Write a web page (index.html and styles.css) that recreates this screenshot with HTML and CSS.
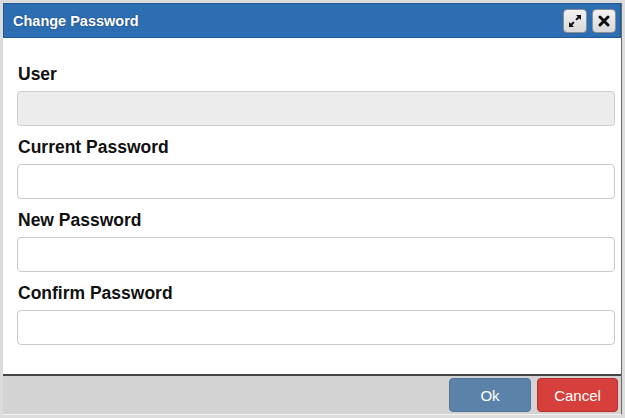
FILE: index.html
```html
<!DOCTYPE html>
<html>
<head>
<meta charset="utf-8">
<link rel="stylesheet" href="styles.css">
</head>
<body>
<div class="dialog">
  <div class="titlebar">
    <span class="title">Change Password</span>
    <div class="tools">
      <button class="tool" aria-label="Maximize">
        <svg width="14" height="14" viewBox="0 0 14 14">
          <path d="M8 1h5v5l-1.8-1.8-2.4 2.4-1.4-1.4 2.4-2.4z" fill="#111"/>
          <path d="M6 13H1V8l1.8 1.8 2.4-2.4 1.4 1.4-2.4 2.4z" fill="#111"/>
        </svg>
      </button>
      <button class="tool" aria-label="Close">
        <svg width="12" height="12" viewBox="0 0 12 12">
          <path d="M2 2L10 10M10 2L2 10" stroke="#111" stroke-width="3" stroke-linecap="round"/>
        </svg>
      </button>
    </div>
  </div>
  <div class="content">
    <div class="field">
      <label class="label">User</label>
      <input class="input disabled" type="text" disabled>
    </div>
    <div class="field">
      <label class="label">Current Password</label>
      <input class="input" type="password">
    </div>
    <div class="field">
      <label class="label">New Password</label>
      <input class="input" type="password">
    </div>
    <div class="field">
      <label class="label">Confirm Password</label>
      <input class="input" type="password">
    </div>
  </div>
  <div class="footer">
    <button class="btn ok">Ok</button>
    <button class="btn cancel">Cancel</button>
  </div>
</div>
</body>
</html>
```
FILE: styles.css
```css
html, body {
  margin: 0;
  padding: 0;
  background: #dcdcdc;
  font-family: "Liberation Sans", Arial, sans-serif;
}
.dialog {
  margin: 3px 0 0 3px;
  width: 618px;
  height: 411px;
  display: flex;
  flex-direction: column;
  background: #fff;
  border-right: 1px solid #6a6a6a;
  border-bottom: 1px solid #f4f4f4;
  box-shadow: 0 3px 0 #6a6a6a;
}
.titlebar {
  height: 33px;
  background: #2d6eb3;
  border: 1px solid #1d5a9c;
  display: flex;
  align-items: center;
  justify-content: space-between;
  padding: 0 4px 0 9px;
}
.title {
  color: #fff;
  font-weight: bold;
  font-size: 14.5px;
  text-shadow: 0 0 2px rgba(0,0,0,0.4);
}
.tools {
  display: flex;
  gap: 5px;
}
.tool {
  width: 24px;
  height: 24px;
  padding: 0;
  margin: 0;
  border: 1px solid #8a8f96;
  border-radius: 4px;
  background: linear-gradient(#f2f2f2, #d9d9d9);
  display: flex;
  align-items: center;
  justify-content: center;
}
.content {
  flex: 1;
  padding: 25px 6px 0 14px;
}
.field {
  display: flex;
  flex-direction: column;
  margin-bottom: 10px;
}
.label {
  font-weight: bold;
  font-size: 17.5px;
  color: #111;
  line-height: 20px;
  height: 20px;
  margin-bottom: 8px;
  padding-left: 1px;
  margin-top: 1px;
  margin-bottom: 7px;
}
.input {
  box-sizing: border-box;
  width: 598px;
  height: 35px;
  border: 1px solid #c9c9c9;
  border-radius: 4px;
  background: #fff;
  margin: 0;
}
.input.disabled {
  background: #ececec;
  border-color: #cdcdcd;
}
.footer {
  height: 38px;
  border-top: 2px solid #464646;
  background: #d3d3d3;
  display: flex;
  justify-content: flex-end;
  align-items: center;
  gap: 6px;
  padding: 0 3px 0 0;
}
.btn {
  height: 34px;
  border-radius: 4px;
  color: #fff;
  font-family: "Liberation Sans", Arial, sans-serif;
  font-size: 15px;
  padding: 0;
  margin: 0;
}
.ok {
  width: 82px;
  background: #5b83a9;
  border: 1px solid #4f759b;
}
.cancel {
  width: 81px;
  background: #d63f3b;
  border: 1px solid #b52f2b;
}
```
